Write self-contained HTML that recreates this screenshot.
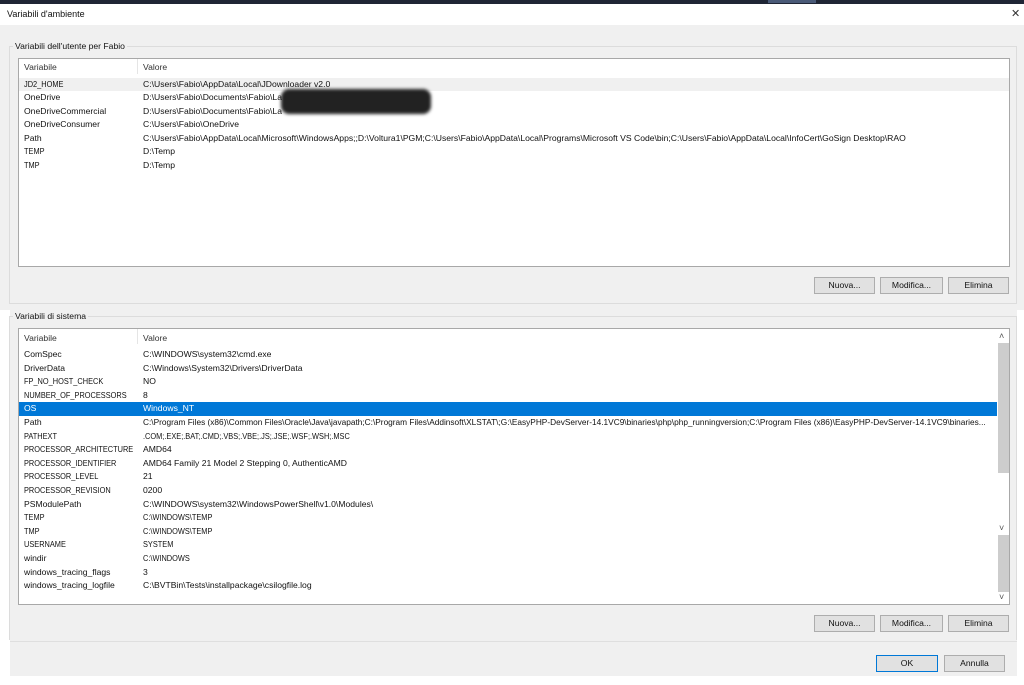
<!DOCTYPE html>
<html><head><style>
*{margin:0;padding:0;box-sizing:border-box}
body{width:1024px;height:685px;position:relative;background:#fff;font-family:"Liberation Sans",sans-serif;font-size:8.6px;color:#111;overflow:hidden}
.a{position:absolute}
.grp{position:absolute;border:1px solid #dcdcdc}
.lbl{position:absolute;background:#f0f0f0;padding:0 2px;font-size:8.6px}
.list{position:absolute;background:#fff;border:1px solid #a8a8a8}
.row{position:absolute;left:0;height:13.6px;line-height:13.6px;white-space:nowrap;width:100%}
.row span{position:absolute}
.c1{left:5px}.c2{left:124px}
.u{transform:scaleX(0.86);transform-origin:left center}
.btn{position:absolute;height:17px;background:#e1e1e1;border:1px solid #adadad;text-align:center;line-height:15px;font-size:8.6px}
</style></head><body>
<div class="a" style="left:0;top:0;width:1024px;height:4px;background:#1f2535"></div>
<div class="a" style="left:768px;top:0;width:48px;height:3px;background:#4a5a78"></div>
<div class="a" style="left:0;top:4px;width:1024px;height:21px;background:#fff"></div>
<div class="a" style="left:7px;top:9px;font-size:9px">Variabili d'ambiente</div>
<div class="a" style="left:1011px;top:7px;font-size:11px;color:#333">✕</div>
<div class="a" style="left:0;top:25px;width:1024px;height:285px;background:#f0f0f0"></div>
<div class="a" style="left:10px;top:305px;width:1007px;height:371px;background:#f0f0f0"></div>

<div class="grp" style="left:9px;top:46px;width:1008px;height:258px"></div>
<div class="lbl" style="left:13px;top:41px">Variabili dell'utente per Fabio</div>
<div class="list" style="left:18px;top:58px;width:992px;height:209px">
<div class="a" style="left:118px;top:0;width:1px;height:15px;background:#e5e5e5"></div>
<div class="row" style="top:2px;color:#333"><span class="c1">Variabile</span><span class="c2">Valore</span></div>
<div class="row" style="top:18.5px;background:#f0f0f0"><span class="c1 u">JD2_HOME</span><span class="c2">C:\Users\Fabio\AppData\Local\JDownloader v2.0</span></div>
<div class="row" style="top:32px"><span class="c1">OneDrive</span><span class="c2">D:\Users\Fabio\Documents\Fabio\La</span></div>
<div class="row" style="top:45.6px"><span class="c1">OneDriveCommercial</span><span class="c2">D:\Users\Fabio\Documents\Fabio\La</span></div>
<div class="row" style="top:59.2px"><span class="c1">OneDriveConsumer</span><span class="c2">C:\Users\Fabio\OneDrive</span></div>
<div class="row" style="top:72.8px"><span class="c1">Path</span><span class="c2">C:\Users\Fabio\AppData\Local\Microsoft\WindowsApps;;D:\Voltura1\PGM;C:\Users\Fabio\AppData\Local\Programs\Microsoft VS Code\bin;C:\Users\Fabio\AppData\Local\InfoCert\GoSign Desktop\RAO</span></div>
<div class="row" style="top:86.4px"><span class="c1 u">TEMP</span><span class="c2">D:\Temp</span></div>
<div class="row" style="top:100px"><span class="c1 u">TMP</span><span class="c2">D:\Temp</span></div>
<div class="a" style="left:262px;top:30px;width:150px;height:25px;background:#222;border-radius:8px;filter:blur(1.5px)"></div>
</div>
<div class="btn" style="left:814px;top:277px;width:61px">Nuova...</div>
<div class="btn" style="left:880px;top:277px;width:63px">Modifica...</div>
<div class="btn" style="left:948px;top:277px;width:61px">Elimina</div>

<div class="grp" style="left:9px;top:316px;width:1008px;height:324px;border-bottom:none"></div>
<div class="lbl" style="left:13px;top:311px">Variabili di sistema</div>
<div class="list" style="left:18px;top:328px;width:992px;height:277px">
<div class="a" style="left:118px;top:0;width:1px;height:15px;background:#e5e5e5"></div>
<div class="row" style="top:3px;color:#333"><span class="c1">Variabile</span><span class="c2">Valore</span></div>
<div class="row" style="top:19px"><span class="c1">ComSpec</span><span class="c2">C:\WINDOWS\system32\cmd.exe</span></div>
<div class="row" style="top:32.6px"><span class="c1">DriverData</span><span class="c2">C:\Windows\System32\Drivers\DriverData</span></div>
<div class="row" style="top:46.2px"><span class="c1 u">FP_NO_HOST_CHECK</span><span class="c2">NO</span></div>
<div class="row" style="top:59.8px"><span class="c1 u">NUMBER_OF_PROCESSORS</span><span class="c2">8</span></div>
<div class="row" style="top:73.4px;background:#0078d7;color:#fff;width:978px"><span class="c1">OS</span><span class="c2">Windows_NT</span></div>
<div class="row" style="top:87px;width:976px;overflow:hidden"><span class="c1">Path</span><span class="c2" style="transform:scaleX(0.965);transform-origin:left center">C:\Program Files (x86)\Common Files\Oracle\Java\javapath;C:\Program Files\Addinsoft\XLSTAT\;G:\EasyPHP-DevServer-14.1VC9\binaries\php\php_runningversion;C:\Program Files (x86)\EasyPHP-DevServer-14.1VC9\binaries...</span></div>
<div class="row" style="top:100.6px"><span class="c1 u">PATHEXT</span><span class="c2 u">.COM;.EXE;.BAT;.CMD;.VBS;.VBE;.JS;.JSE;.WSF;.WSH;.MSC</span></div>
<div class="row" style="top:114.2px"><span class="c1 u">PROCESSOR_ARCHITECTURE</span><span class="c2">AMD64</span></div>
<div class="row" style="top:127.8px"><span class="c1 u">PROCESSOR_IDENTIFIER</span><span class="c2">AMD64 Family 21 Model 2 Stepping 0, AuthenticAMD</span></div>
<div class="row" style="top:141.4px"><span class="c1 u">PROCESSOR_LEVEL</span><span class="c2">21</span></div>
<div class="row" style="top:155px"><span class="c1 u">PROCESSOR_REVISION</span><span class="c2">0200</span></div>
<div class="row" style="top:168.6px"><span class="c1">PSModulePath</span><span class="c2">C:\WINDOWS\system32\WindowsPowerShell\v1.0\Modules\</span></div>
<div class="row" style="top:182.2px"><span class="c1 u">TEMP</span><span class="c2 u">C:\WINDOWS\TEMP</span></div>
<div class="row" style="top:195.8px"><span class="c1 u">TMP</span><span class="c2 u">C:\WINDOWS\TEMP</span></div>
<div class="row" style="top:209.4px"><span class="c1 u">USERNAME</span><span class="c2 u">SYSTEM</span></div>
<div class="row" style="top:223px"><span class="c1">windir</span><span class="c2 u">C:\WINDOWS</span></div>
<div class="row" style="top:236.6px"><span class="c1">windows_tracing_flags</span><span class="c2">3</span></div>
<div class="row" style="top:250.2px"><span class="c1">windows_tracing_logfile</span><span class="c2">C:\BVTBin\Tests\installpackage\csilogfile.log</span></div>
<div class="a" style="left:979px;top:14px;width:11px;height:130px;background:#cdcdcd"></div>
<div class="a" style="left:979px;top:206px;width:11px;height:57px;background:#cdcdcd"></div>
<div class="a" style="left:980px;top:2px;font-size:9px;color:#555">˄</div>
<div class="a" style="left:980px;top:194px;font-size:9px;color:#555">˅</div>
<div class="a" style="left:980px;top:263px;font-size:9px;color:#555">˅</div>
</div>
<div class="btn" style="left:814px;top:615px;width:61px">Nuova...</div>
<div class="btn" style="left:880px;top:615px;width:63px">Modifica...</div>
<div class="btn" style="left:948px;top:615px;width:61px">Elimina</div>
<div class="a" style="left:10px;top:641px;width:1007px;height:1px;background:#dfdfdf"></div>
<div class="btn" style="left:876px;top:655px;width:62px;border:1px solid #0078d7">OK</div>
<div class="btn" style="left:944px;top:655px;width:61px">Annulla</div>
</body></html>
